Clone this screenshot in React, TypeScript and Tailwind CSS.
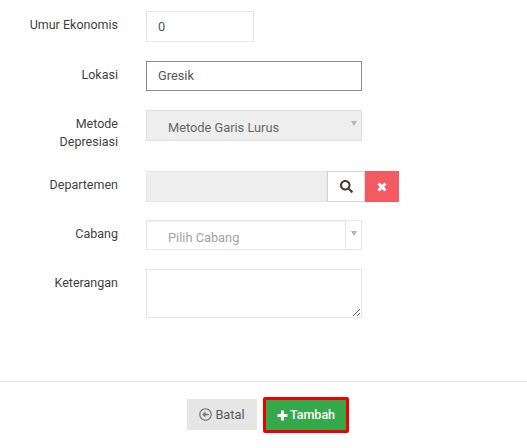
import React from 'react';
import { FaSearch, FaRegArrowAltCircleLeft } from 'react-icons/fa';

const Row: React.FC<{ label: React.ReactNode; className?: string; children: React.ReactNode }> = ({
  label,
  className,
  children,
}) => (
  <div className={`flex ${className ?? ''}`}>
    <label className="w-[118px] pt-[5px] text-right text-[12.5px] leading-[18px] text-[#3f3f3f]">{label}</label>
    <div className="ml-[28px]">{children}</div>
  </div>
);

const App: React.FC = () => {
  return (
    <div className="w-[527px] h-[448px] overflow-hidden bg-white font-['Roboto',sans-serif] flex flex-col">
      <div className="h-[381px] pt-[11px]">
        <Row label="Umur Ekonomis">
          <div className="w-[108px] h-[31px] border border-[#e5e6e7] pl-[11px] text-[12.8px] leading-[29px] text-[#555]">0</div>
        </Row>

        <Row label="Lokasi" className="mt-[19px]">
          <div className="w-[216px] h-[30px] border border-[#8c8c8c] pl-[11px] text-[12.8px] leading-[28px] text-[#555]">Gresik</div>
        </Row>

        <Row label={<>Metode<br />Depresiasi</>} className="mt-[19px]">
          <div className="relative w-[216px] h-[31px] border border-[#e0e0e0] bg-[#eeeeee] pl-[21px] text-[12.8px] leading-[33px] text-[#666]">
            Metode Garis Lurus
            <span className="absolute right-[4px] top-[10px] border-x-[3px] border-t-[5px] border-x-transparent border-t-[#b4b4b4]" />
          </div>
        </Row>

        <Row label="Departemen" className="mt-[20px]">
          <div className="flex h-[31px] w-[253px]">
            <div className="w-[181px] border border-[#e5e6e7] bg-[#eeeeee]" />
            <div className="w-[38px] flex items-center justify-center border border-[#d4d4d4] bg-white text-[#4a3a33]">
              <FaSearch className="text-[13px]" />
            </div>
            <div className="w-[34px] flex items-center justify-center bg-[#f55a63] text-white">
              <svg width="10" height="10" viewBox="0 0 10 10">
                <path d="M1.5 1.5L8.5 8.5M8.5 1.5L1.5 8.5" stroke="currentColor" strokeWidth="3" />
              </svg>
            </div>
          </div>
        </Row>

        <Row label="Cabang" className="mt-[18px]">
          <div className="relative flex w-[216px] h-[30px] border border-[#e5e6e7]">
            <div className="flex-1 pl-[21px] text-[12.8px] leading-[32px] text-[#a3a3a3] border-t border-[#eeeeee]">Pilih Cabang</div>
            <div className="w-[16px] border-l border-[#e5e6e7]">
              <span className="absolute right-[4px] top-[10px] border-x-[3px] border-t-[5px] border-x-transparent border-t-[#b4b4b4]" />
            </div>
          </div>
        </Row>

        <Row label="Keterangan" className="mt-[19px]">
          <textarea
            readOnly
            className="block w-[216px] h-[49px] border border-[#e5e6e7] outline-none resize-y"
          />
        </Row>
      </div>

      <div className="flex-1 border-t border-[#e5e6e7] flex items-start pt-[15px] pl-[187px]">
        <button className="mt-[2px] w-[70px] h-[31px] flex items-center justify-center gap-[3px] bg-[#e6e6e6] text-[12.8px] text-[#5a5a5a]">
          <FaRegArrowAltCircleLeft className="text-[13px] text-[#777]" />
          Batal
        </button>
        <button className="ml-[6px] w-[86px] h-[36px] flex items-center justify-center gap-[2px] rounded-[2px] border-[3px] border-[#f00000] bg-[#35a94a] text-[12.5px] font-medium text-white">
          <svg width="11" height="11" viewBox="0 0 11 11">
            <path d="M5.5 0.5V10.5M0.5 5.5H10.5" stroke="currentColor" strokeWidth="3" />
          </svg>
          Tambah
        </button>
      </div>
    </div>
  );
};

export default App;
